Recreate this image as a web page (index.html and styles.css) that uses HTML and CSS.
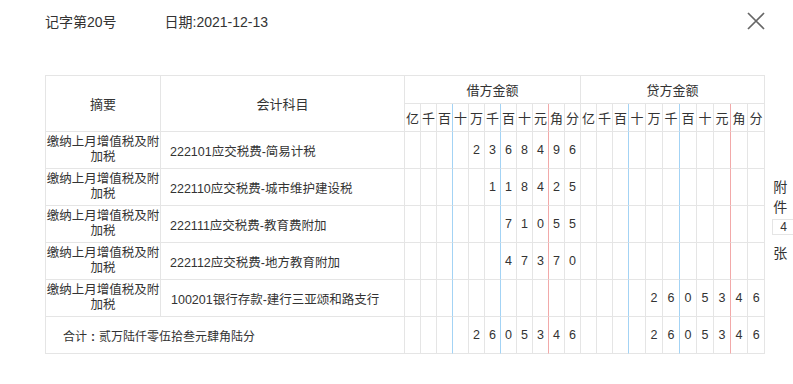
FILE: index.html
```html
<!DOCTYPE html>
<html lang="zh-CN">
<head>
<meta charset="utf-8">
<title>记账凭证</title>
<link rel="stylesheet" href="styles.css">
</head>
<body>
<div class="dialog">
  <div class="top">
    <div class="meta"><span>记字第20号</span><span>日期:2021-12-13</span></div>
    <button class="close" aria-label="关闭">
      <svg width="18" height="18" viewBox="0 0 18 18"><path d="M1 1L17 17M17 1L1 17" stroke="#666" stroke-width="1.7" fill="none"/></svg>
    </button>
  </div>
  <div class="main">
    <table class="voucher">
      <colgroup>
        <col class="c-sum"><col class="c-acc">
        <col class="c16"><col class="c16"><col class="c16"><col class="c16"><col class="c16"><col class="c16"><col class="c16"><col class="c16"><col class="c16"><col class="c16"><col class="c16">
        <col class="c16"><col class="c16"><col class="c16"><col class="c17"><col class="c17"><col class="c17"><col class="c17"><col class="c17"><col class="c17"><col class="c17"><col class="c17">
      </colgroup>
      <thead>
        <tr class="h1">
          <th rowspan="2">摘要</th>
          <th rowspan="2">会计科目</th>
          <th colspan="11">借方金额</th>
          <th colspan="11">贷方金额</th>
        </tr>
        <tr class="h2">
          <th>亿</th><th>千</th><th class="bl">百</th><th>十</th><th>万</th><th class="bl">千</th><th>百</th><th>十</th><th class="rd">元</th><th>角</th><th>分</th>
          <th>亿</th><th>千</th><th class="bl">百</th><th>十</th><th>万</th><th class="bl">千</th><th>百</th><th>十</th><th class="rd">元</th><th>角</th><th>分</th>
        </tr>
      </thead>
      <tbody>
        <tr class="row">
          <td class="sum">缴纳上月增值税及附加税</td>
          <td class="acc">222101应交税费-简易计税</td>
          <td></td><td></td><td class="bl"></td><td></td><td>2</td><td class="bl">3</td><td>6</td><td>8</td><td class="rd">4</td><td>9</td><td>6</td>
          <td></td><td></td><td class="bl"></td><td></td><td></td><td class="bl"></td><td></td><td></td><td class="rd"></td><td></td><td></td>
        </tr>
        <tr class="row">
          <td class="sum">缴纳上月增值税及附加税</td>
          <td class="acc">222110应交税费-城市维护建设税</td>
          <td></td><td></td><td class="bl"></td><td></td><td></td><td class="bl">1</td><td>1</td><td>8</td><td class="rd">4</td><td>2</td><td>5</td>
          <td></td><td></td><td class="bl"></td><td></td><td></td><td class="bl"></td><td></td><td></td><td class="rd"></td><td></td><td></td>
        </tr>
        <tr class="row">
          <td class="sum">缴纳上月增值税及附加税</td>
          <td class="acc">222111应交税费-教育费附加</td>
          <td></td><td></td><td class="bl"></td><td></td><td></td><td class="bl"></td><td>7</td><td>1</td><td class="rd">0</td><td>5</td><td>5</td>
          <td></td><td></td><td class="bl"></td><td></td><td></td><td class="bl"></td><td></td><td></td><td class="rd"></td><td></td><td></td>
        </tr>
        <tr class="row">
          <td class="sum">缴纳上月增值税及附加税</td>
          <td class="acc">222112应交税费-地方教育附加</td>
          <td></td><td></td><td class="bl"></td><td></td><td></td><td class="bl"></td><td>4</td><td>7</td><td class="rd">3</td><td>7</td><td>0</td>
          <td></td><td></td><td class="bl"></td><td></td><td></td><td class="bl"></td><td></td><td></td><td class="rd"></td><td></td><td></td>
        </tr>
        <tr class="row">
          <td class="sum">缴纳上月增值税及附加税</td>
          <td class="acc acc-wide">100201银行存款-建行三亚颂和路支行</td>
          <td></td><td></td><td class="bl"></td><td></td><td></td><td class="bl"></td><td></td><td></td><td class="rd"></td><td></td><td></td>
          <td></td><td></td><td class="bl"></td><td></td><td>2</td><td class="bl">6</td><td>0</td><td>5</td><td class="rd">3</td><td>4</td><td>6</td>
        </tr>
        <tr class="row">
          <td class="total" colspan="2">合计<span class="colon">:</span>贰万陆仟零伍拾叁元肆角陆分</td>
          <td></td><td></td><td class="bl"></td><td></td><td>2</td><td class="bl">6</td><td>0</td><td>5</td><td class="rd">3</td><td>4</td><td>6</td>
          <td></td><td></td><td class="bl"></td><td></td><td>2</td><td class="bl">6</td><td>0</td><td>5</td><td class="rd">3</td><td>4</td><td>6</td>
        </tr>
      </tbody>
    </table>
    <div class="attach">
      <span class="ch">附</span>
      <span class="ch">件</span>
      <span class="count">4</span>
      <span class="ch">张</span>
    </div>
  </div>
</div>
</body>
</html>
```

FILE: styles.css
```css
html, body {
  margin: 0;
  background: #fff;
}

body {
  font-family: "Liberation Sans", "Noto Sans CJK SC", sans-serif;
  color: #333;
}

.dialog {
  padding: 12px 0 0 45px;
}

.top {
  display: flex;
  justify-content: space-between;
  align-items: flex-start;
  width: 720px;
  height: 20px;
}

.meta {
  display: flex;
  gap: 48px;
  font-size: 14px;
  line-height: 20px;
}

.close {
  width: 18px;
  height: 18px;
  padding: 0;
  border: 0;
  background: none;
  display: block;
}

.close svg {
  display: block;
}

.main {
  display: flex;
  align-items: center;
  margin-top: 43px;
}

.voucher {
  border-collapse: separate;
  border-spacing: 0;
  table-layout: fixed;
  width: 720px;
  border-left: 1px solid #e5e5e5;
  border-top: 1px solid #e5e5e5;
  flex: none;
}

.c-sum { width: 115px; }
.c-acc { width: 244px; }
.c16 { width: 16px; }
.c17 { width: 17px; }

.voucher th,
.voucher td {
  border-right: 1px solid #e5e5e5;
  border-bottom: 1px solid #e5e5e5;
  padding: 0;
  text-align: center;
  font-weight: normal;
  white-space: nowrap;
  overflow: hidden;
}

.voucher th {
  font-size: 13px;
}

.h1, .h2 {
  height: 28px;
}

.row {
  height: 37px;
}

.voucher td {
  font-size: 12.5px;
}

.voucher .bl {
  border-right-color: #a3d3f5;
}

.voucher .rd {
  border-right-color: #f2a9a9;
}

.voucher td.sum {
  white-space: normal;
  line-height: 15px;
  font-size: 12.5px;
}

.voucher td.acc {
  text-align: left;
  padding-left: 9px;
}

.voucher td.acc-wide {
  padding-left: 10px;
}

.voucher td.total {
  text-align: left;
  padding-left: 17px;
  font-size: 12px;
}

.colon {
  display: inline-block;
  width: 12px;
  text-align: center;
  font-weight: bold;
}

.attach {
  display: flex;
  flex-direction: column;
  align-items: flex-start;
  margin-left: 7px;
  margin-top: 10px;
  flex: none;
}

.attach .ch {
  font-size: 14px;
  line-height: 20px;
  padding-left: 1px;
}

.attach .count {
  box-sizing: border-box;
  width: 23px;
  height: 16px;
  margin: 2px 0 8px;
  border: 1px solid #e5e5e5;
  font-size: 12px;
  line-height: 14px;
  text-align: center;
}
```
